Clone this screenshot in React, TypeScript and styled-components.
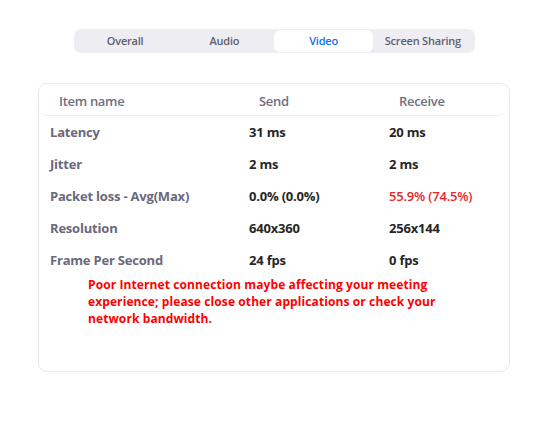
import React from 'react';
import { useState } from 'react';
import styled, { createGlobalStyle } from 'styled-components';

const GlobalStyle = createGlobalStyle`
  body {
    margin: 0;
    background: #ffffff;
    font-family: 'Open Sans', 'Noto Sans', sans-serif;
  }
`;

const Page = styled.div`
  width: 472px;
  padding: 29px 0 0 38px;
  display: flex;
  flex-direction: column;
  align-items: center;
`;

const TabBar = styled.div`
  display: grid;
  grid-template-columns: repeat(4, 1fr);
  width: 397px;
  padding: 1px 2px;
  background-color: #ededf2;
  border-radius: 7px;
`;

const Tab = styled.button<{ $active?: boolean }>`
  height: 22px;
  border: none;
  border-radius: 6px;
  padding: 0 0 2px 0;
  font-family: inherit;
  font-weight: 600;
  font-size: 11px;
  letter-spacing: -0.2px;
  cursor: pointer;
  background-color: ${(props) => (props.$active ? '#ffffff' : 'transparent')};
  color: ${(props) => (props.$active ? '#0e71eb' : '#5f5f6e')};
`;

const Card = styled.div`
  box-sizing: border-box;
  width: 472px;
  height: 289px;
  margin-top: 30px;
  border: 1px solid #e8e9ef;
  border-radius: 9px;
`;

const HeaderRow = styled.div`
  display: grid;
  grid-template-columns: 200px 140px 1fr;
  align-items: center;
  height: 28px;
  margin: -1px 2px 0 0;
  padding: 4px 0 0 20px;
  border-bottom: 1px solid #e8e9ef;
  border-radius: 0 0 9px 9px;
  font-weight: 600;
  font-size: 13px;
  letter-spacing: -0.3px;
  color: #6f6f80;
`;

const Row = styled.div`
  display: grid;
  grid-template-columns: 199px 140px 1fr;
  align-items: center;
  height: 32px;
  padding-left: 11px;
  font-weight: 700;
  font-size: 13px;
  letter-spacing: -0.2px;
`;

const Label = styled.span`
  color: #69697b;
`;

const Value = styled.span<{ $bad?: boolean }>`
  color: ${(props) => (props.$bad ? '#e8262a' : '#262626')};
  font-weight: ${(props) => (props.$bad ? 600 : 700)};
`;

const Warning = styled.p`
  margin: 0;
  padding-left: 49px;
  font-weight: 700;
  font-size: 12px;
  line-height: 17px;
  letter-spacing: 0.1px;
  color: #ff0000;
`;

const tabs = ['Overall', 'Audio', 'Video', 'Screen Sharing'];

const rows = [
  { name: 'Latency', send: '31 ms', receive: '20 ms' },
  { name: 'Jitter', send: '2 ms', receive: '2 ms' },
  { name: 'Packet loss - Avg(Max)', send: '0.0% (0.0%)', receive: '55.9% (74.5%)', bad: true },
  { name: 'Resolution', send: '640x360', receive: '256x144' },
  { name: 'Frame Per Second', send: '24 fps', receive: '0 fps' },
];

function App() {
  const [activeTab, setActiveTab] = useState('Video');
  return (
    <>
      <GlobalStyle />
      <Page>
        <TabBar>
          {tabs.map((tab) => (
            <Tab key={tab} $active={tab === activeTab} onClick={() => setActiveTab(tab)}>
              {tab}
            </Tab>
          ))}
        </TabBar>
        <Card>
          <HeaderRow>
            <span>Item name</span>
            <span>Send</span>
            <span>Receive</span>
          </HeaderRow>
          {rows.map((row) => (
            <Row key={row.name}>
              <Label>{row.name}</Label>
              <Value>{row.send}</Value>
              <Value $bad={row.bad}>{row.receive}</Value>
            </Row>
          ))}
          <Warning>
            Poor Internet connection maybe affecting your meeting
            <br />
            experience; please close other applications or check your
            <br />
            network bandwidth.
          </Warning>
        </Card>
      </Page>
    </>
  );
}

export default App;
